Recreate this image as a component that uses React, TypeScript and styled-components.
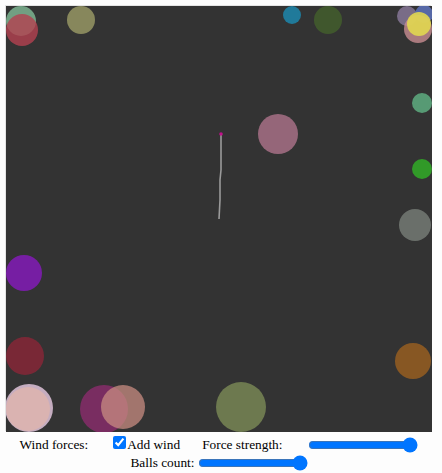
import React from "react";
import styled, { createGlobalStyle } from "styled-components";

const Global = createGlobalStyle`
  html, body { margin: 0; padding: 0; background: #fdfdfd; }
  body { font-family: "Liberation Serif", "Times New Roman", serif; font-size: 13.33px; color: #000; }
`;

const Page = styled.div`
  padding: 6px 10px 0 6px;
  width: 426px;
`;

const Stage = styled.div`
  width: 426px;
  height: 426px;
  background: #333333;
  box-shadow: -1px -1px 0 #e4e4e4;
`;

const Controls = styled.div`
  display: flex;
  flex-wrap: wrap;
  justify-content: center;
  align-items: center;
  width: 426px;
  line-height: 18px;
  margin-top: 4px;
`;

const Label = styled.span<{ $ml?: number }>`
  margin-left: ${(p) => p.$ml ?? 0}px;
  white-space: nowrap;
`;

const Check = styled.input`
  width: 13px;
  height: 13px;
  margin: 0 1px 0 0;
  accent-color: #0075ff;
`;

const Range = styled.input<{ $ml?: number }>`
  width: 110px;
  height: 16px;
  margin: 0 0 0 ${(p) => p.$ml ?? 0}px;
  accent-color: #0075ff;
`;

const Break = styled.div`
  flex-basis: 100%;
  height: 0;
`;

type Ball = { x: number; y: number; r: number; c: string };

const balls: Ball[] = [
  { x: 21, y: 21, r: 15, c: "rgba(125,180,145,0.85)" },
  { x: 22, y: 30, r: 16, c: "rgba(180,65,80,0.8)" },
  { x: 81, y: 20, r: 14, c: "rgba(140,140,95,0.95)" },
  { x: 292, y: 15, r: 9, c: "rgba(30,130,165,0.9)" },
  { x: 328, y: 20, r: 14, c: "rgba(65,90,45,0.95)" },
  { x: 407, y: 16, r: 10, c: "rgba(125,112,140,0.95)" },
  { x: 424, y: 14, r: 9, c: "rgba(90,110,180,0.9)" },
  { x: 418, y: 29, r: 14, c: "rgba(200,140,145,0.8)" },
  { x: 419, y: 24, r: 12, c: "rgba(225,215,80,0.9)" },
  { x: 422, y: 103, r: 10, c: "rgba(90,160,120,0.95)" },
  { x: 422, y: 169, r: 10, c: "rgba(50,160,40,0.95)" },
  { x: 415, y: 225, r: 16, c: "rgba(110,115,110,0.95)" },
  { x: 278, y: 134, r: 20, c: "rgba(155,105,125,0.95)" },
  { x: 24, y: 273, r: 18, c: "rgba(122,30,170,0.95)" },
  { x: 25, y: 356, r: 19, c: "rgba(125,40,55,0.95)" },
  { x: 413, y: 361, r: 18, c: "rgba(140,90,35,0.95)" },
  { x: 29, y: 408, r: 24, c: "rgba(205,180,200,0.95)" },
  { x: 28, y: 409, r: 22, c: "rgba(220,180,175,0.9)" },
  { x: 104, y: 409, r: 24, c: "rgba(125,45,100,0.95)" },
  { x: 123, y: 407, r: 22, c: "rgba(200,140,130,0.75)" },
  { x: 241, y: 407, r: 25, c: "rgba(110,122,80,0.98)" },
];

export default function App() {
  return (
    <>
      <Global />
      <Page>
        <Stage>
          <svg width="426" height="426" viewBox="6 6 426 426">
            {balls.map((b, i) => (
              <circle key={i} cx={b.x} cy={b.y} r={b.r} fill={b.c} />
            ))}
            <path d="M221 134 L221 170 L220 180 L220 200 L219 219" stroke="#9a9a9a" strokeWidth="1.6" fill="none" />
            <circle cx={221} cy={134} r={1.8} fill="#c0108a" />
          </svg>
        </Stage>
        <Controls>
          <Label>Wind forces:</Label>
          <Label $ml={25}>
            <Check type="checkbox" defaultChecked />
          </Label>
          <Label>Add wind</Label>
          <Label $ml={22}>Force strength:</Label>
          <Range type="range" min={0} max={100} defaultValue={100} $ml={26} />
          <Break />
          <Label>Balls count:</Label>
          <Range type="range" min={0} max={100} defaultValue={100} $ml={3} />
        </Controls>
      </Page>
    </>
  );
}
